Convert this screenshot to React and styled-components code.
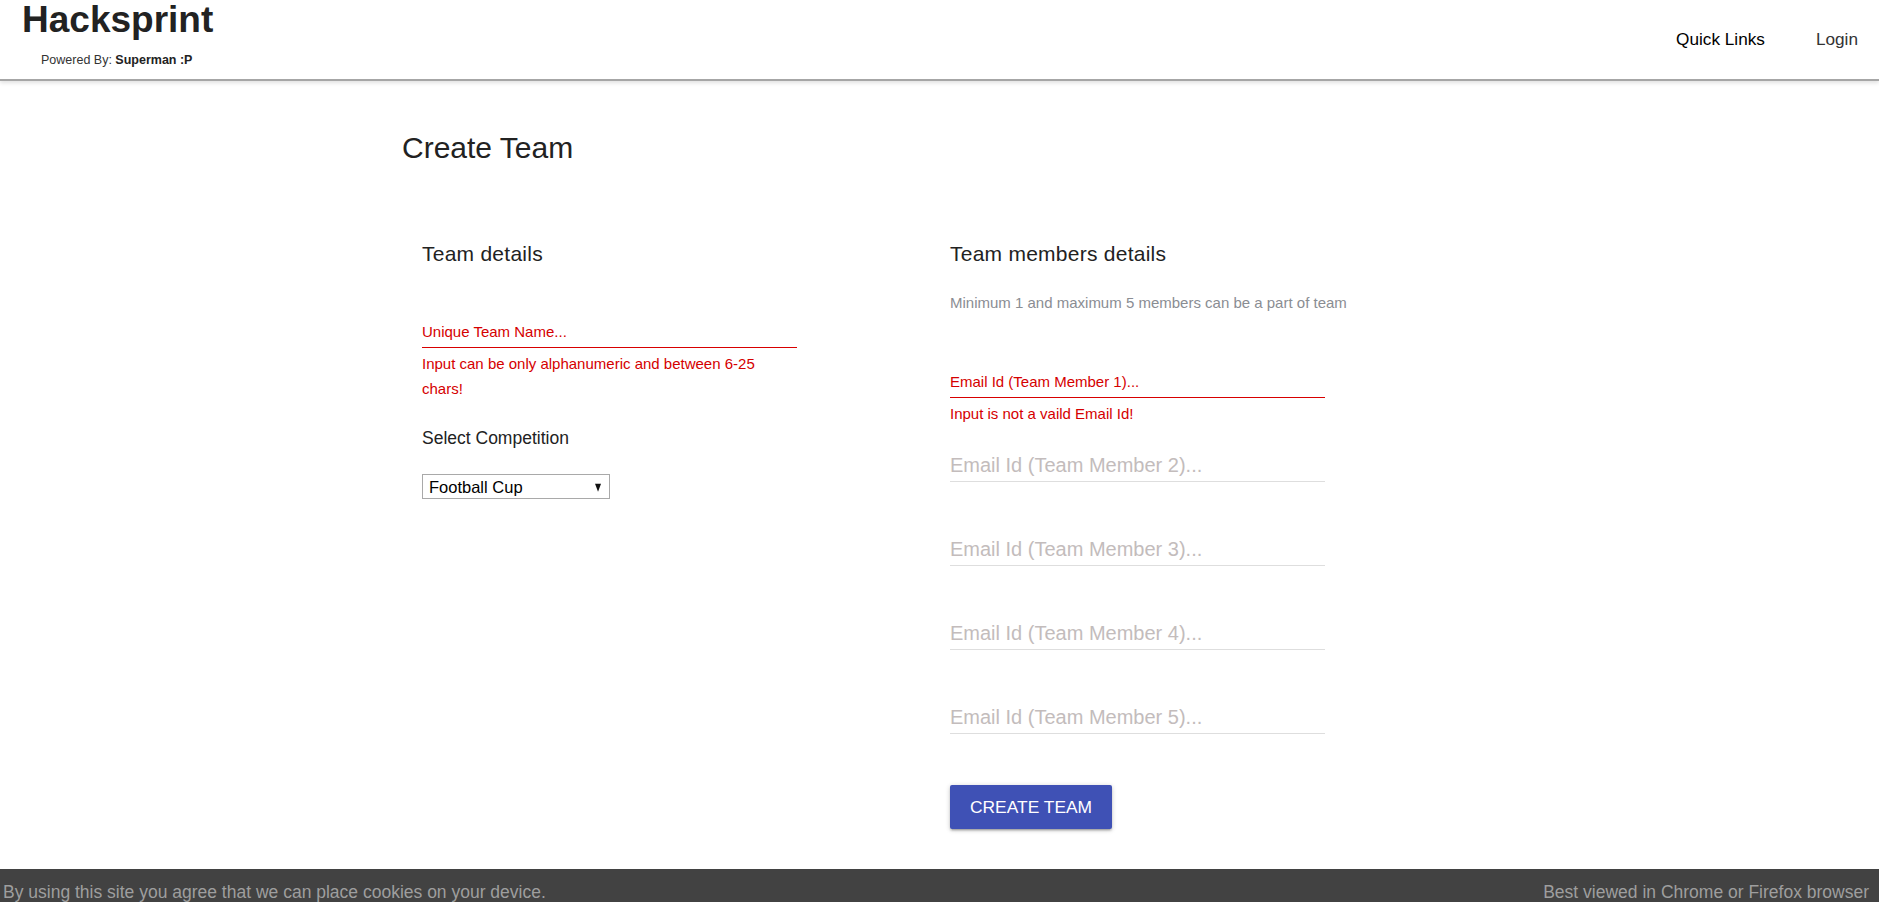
import React from "react";
import styled, { createGlobalStyle } from "styled-components";

const GlobalStyle = createGlobalStyle`
  html, body {
    margin: 0;
    padding: 0;
    height: 100%;
    overflow: hidden;
    background: #fff;
  }
  body {
    font-family: "Liberation Sans", Arial, sans-serif;
  }
`;

const Page = styled.div`
  display: flex;
  flex-direction: column;
  height: 100vh;
`;

const Header = styled.header`
  flex-shrink: 0;
  height: 81px;
  box-sizing: border-box;
  border-bottom: 2px solid #a6a6a6;
  box-shadow: 0 2px 4px rgba(0, 0, 0, 0.12);
  display: flex;
  justify-content: space-between;
  align-items: flex-start;
  padding: 0 21px 0 22px;
  position: relative;
  z-index: 1;
`;

const Brand = styled.div`
  display: flex;
  flex-direction: column;
`;

const Logo = styled.div`
  font-size: 37px;
  line-height: 40px;
  font-weight: 700;
  color: #222;
`;

const Powered = styled.div`
  margin: 12px 0 0 19px;
  font-size: 12.5px;
  line-height: 16px;
  color: #333;

  strong {
    color: #222;
  }
`;

const Nav = styled.nav`
  display: flex;
  gap: 51px;
  padding-top: 29px;
`;

const NavLink = styled.a`
  font-size: 17.2px;
  line-height: 20px;
  color: ${(p) => p.$color || "#000"};
  text-decoration: none;
  cursor: pointer;
`;

const Main = styled.main`
  flex: 1;
  min-height: 0;
  width: 1075px;
  margin: 0 auto;
`;

const Title = styled.h4`
  margin: 49px 0 0;
  font-size: 30px;
  line-height: 35px;
  font-weight: 400;
  color: #222;
`;

const Columns = styled.div`
  display: grid;
  grid-template-columns: 528px 1fr;
  margin-top: 75px;
`;

const Column = styled.section`
  padding: 0 20px;
  display: flex;
  flex-direction: column;
  align-items: flex-start;
`;

const SectionTitle = styled.h5`
  margin: 0;
  font-size: 21px;
  line-height: 28px;
  font-weight: 400;
  letter-spacing: 0.25px;
  color: #222;
`;

const Note = styled.p`
  margin: 25px 0 0;
  font-size: 15px;
  line-height: 20px;
  color: #8a8d93;
`;

const Fields = styled.div`
  margin-top: ${(p) => p.$top}px;
  display: flex;
  flex-direction: column;
`;

const Field = styled.div`
  width: 375px;
  margin-bottom: 23px;
`;

const Input = styled.input`
  display: block;
  width: 100%;
  height: 33px;
  box-sizing: border-box;
  border: 0;
  border-bottom: 1px solid ${(p) => (p.$invalid ? "#d80000" : "#dedede")};
  padding: 0;
  background: transparent;
  font-family: inherit;
  font-size: ${(p) => (p.$invalid ? 15 : 20)}px;
  color: #222;
  outline: none;

  &::placeholder {
    color: ${(p) => (p.$invalid ? "#d50000" : "#c3bcbc")};
    opacity: 1;
  }
`;

const Helper = styled.div`
  margin-top: 3px;
  min-height: 25px;
  padding-right: 4px;
  font-size: 15px;
  line-height: 25px;
  color: #d50000;
`;

const Label = styled.div`
  margin: 0 0 22px;
  font-size: 17.5px;
  line-height: 28px;
  color: #222;
`;

const SelectWrap = styled.div`
  position: relative;
  width: 188px;
  height: 25px;
`;

const Select = styled.select`
  appearance: none;
  -webkit-appearance: none;
  width: 100%;
  height: 100%;
  box-sizing: border-box;
  border: 1px solid #a9a9a9;
  border-radius: 0;
  padding: 0 0 0 6px;
  background: #fff;
  font-family: inherit;
  font-size: 16.5px;
  color: #000;
  outline: none;
`;

const Arrow = styled.span`
  position: absolute;
  right: 9px;
  top: 50%;
  transform: translateY(-40%);
  width: 0;
  height: 0;
  border-left: 3.5px solid transparent;
  border-right: 3.5px solid transparent;
  border-top: 8px solid #111;
  pointer-events: none;
`;

const Button = styled.button`
  height: 44px;
  padding: 0 20px;
  border: none;
  border-radius: 2px;
  background: #3f51b5;
  color: #fff;
  font-family: inherit;
  font-size: 17.4px;
  text-transform: uppercase;
  cursor: pointer;
  box-shadow: 0 2px 2px 0 rgba(0, 0, 0, 0.14), 0 3px 1px -2px rgba(0, 0, 0, 0.12),
    0 1px 5px 0 rgba(0, 0, 0, 0.2);
`;

const Footer = styled.footer`
  flex-shrink: 0;
  height: 33px;
  box-sizing: border-box;
  padding: 13px 10px 0 3px;
  background: #424242;
  display: flex;
  justify-content: space-between;
  font-size: 17.5px;
  line-height: 20px;
  color: #9e9e9e;
  overflow: hidden;
  white-space: nowrap;
`;

const members = [1, 2, 3, 4, 5];

export default function App() {
  return (
    <Page>
      <GlobalStyle />
      <Header>
        <Brand>
          <Logo>Hacksprint</Logo>
          <Powered>
            Powered By: <strong>Superman :P</strong>
          </Powered>
        </Brand>
        <Nav>
          <NavLink $color="#000">Quick Links</NavLink>
          <NavLink $color="#333">Login</NavLink>
        </Nav>
      </Header>

      <Main>
        <Title>Create Team</Title>
        <Columns>
          <Column>
            <SectionTitle>Team details</SectionTitle>
            <Fields $top={47}>
              <Field>
                <Input $invalid placeholder="Unique Team Name..." />
                <Helper>Input can be only alphanumeric and between 6-25 chars!</Helper>
              </Field>
            </Fields>
            <Label>Select Competition</Label>
            <SelectWrap>
              <Select defaultValue="football">
                <option value="football">Football Cup</option>
                <option value="cricket">Cricket Cup</option>
              </Select>
              <Arrow />
            </SelectWrap>
          </Column>

          <Column>
            <SectionTitle>Team members details</SectionTitle>
            <Note>Minimum 1 and maximum 5 members can be a part of team</Note>
            <Fields $top={52}>
              {members.map((n) => (
                <Field key={n}>
                  <Input
                    $invalid={n === 1}
                    placeholder={`Email Id (Team Member ${n})...`}
                  />
                  <Helper>{n === 1 ? "Input is not a vaild Email Id!" : ""}</Helper>
                </Field>
              ))}
            </Fields>
            <Button>Create Team</Button>
          </Column>
        </Columns>
      </Main>

      <Footer>
        <span>By using this site you agree that we can place cookies on your device.</span>
        <span>Best viewed in Chrome or Firefox browser</span>
      </Footer>
    </Page>
  );
}
